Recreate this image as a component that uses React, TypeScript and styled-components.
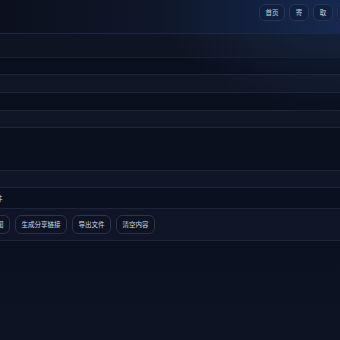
import styled, { createGlobalStyle } from 'styled-components';

const GlobalStyle = createGlobalStyle`
  html, body {
    margin: 0;
    padding: 0;
    background: #0a0f1c;
  }
  body {
    font-family: "Noto Sans CJK SC", "Noto Sans", sans-serif;
    color: #cbd3df;
    overflow: hidden;
  }
`;

const Viewport = styled.div`
  width: 340px;
  height: 340px;
  overflow: hidden;
  display: flex;
  justify-content: center;
  background:
    radial-gradient(ellipse 260px 160px at 340px 0px, rgba(34, 66, 130, 0.35), transparent 70%),
    linear-gradient(180deg, #0a0f1c 0%, #0b1020 60%, #0d1322 100%);
`;

const Page = styled.div`
  flex: 0 0 440px;
  width: 440px;
  display: flex;
  flex-direction: column;
`;

const Header = styled.header`
  height: 34px;
  box-sizing: border-box;
  display: flex;
  align-items: flex-start;
  justify-content: flex-end;
  padding: 4px 27px 0 20px;
  border-bottom: 1px solid #1d2940;
  background: linear-gradient(90deg, #0a0e19 0%, #0e1628 45%, #15274d 85%, #182c56 100%);
`;

const Nav = styled.nav`
  display: flex;
  gap: 4px;
`;

const NavButton = styled.button`
  height: 17px;
  min-width: 20px;
  box-sizing: border-box;
  padding: 0 5.5px;
  border-radius: 6px;
  border: 1px solid #26365a;
  background: rgba(16, 28, 56, 0.6);
  color: #c5cfdf;
  font-family: inherit;
  font-size: 6.5px;
  line-height: 1;
  cursor: pointer;
`;

const SubBar = styled.div`
  height: 24px;
  box-sizing: border-box;
  border-bottom: 1px solid #182134;
  background: rgba(255, 255, 255, 0.025);
`;

const Gap = styled.div<{ $h: number }>`
  height: ${(p) => p.$h}px;
`;

const Band = styled.div<{ $h: number }>`
  height: ${(p) => p.$h}px;
  box-sizing: border-box;
  border-top: 1px solid #1c2639;
  border-bottom: 1px solid #1c2639;
  background: rgba(148, 170, 220, 0.04);
`;

const FileRow = styled.div`
  height: 20px;
  display: flex;
  align-items: center;
  padding: 0 20px;
  font-size: 6.5px;
  color: #dbe2ee;
`;

const Toolbar = styled.div`
  height: 33px;
  box-sizing: border-box;
  display: flex;
  align-items: center;
  gap: 5px;
  padding: 0 21px;
  border-top: 1px solid #1c2639;
  border-bottom: 1px solid #1c2639;
  background: rgba(148, 170, 220, 0.035);
`;

const ToolButton = styled.button`
  height: 19px;
  box-sizing: border-box;
  padding: 0 5.5px;
  border-radius: 6px;
  border: 1px solid #283248;
  background: #0d1322;
  color: #d3dae6;
  font-family: inherit;
  font-size: 6.5px;
  line-height: 1;
  white-space: nowrap;
  cursor: pointer;
`;

const navItems = ['首页', '寄', '取', '设置'];
const tools = ['生成长图', '生成分享链接', '导出文件', '清空内容'];

export default function App() {
  return (
    <>
      <GlobalStyle />
      <Viewport>
        <Page>
          <Header>
            <Nav>
              {navItems.map((n) => (
                <NavButton key={n}>{n}</NavButton>
              ))}
            </Nav>
          </Header>
          <SubBar />
          <Gap $h={16} />
          <Band $h={19} />
          <Gap $h={17} />
          <Band $h={18} />
          <Gap $h={42} />
          <Band $h={18} />
          <FileRow>已选择文件</FileRow>
          <Toolbar>
            {tools.map((t) => (
              <ToolButton key={t}>{t}</ToolButton>
            ))}
          </Toolbar>
        </Page>
      </Viewport>
    </>
  );
}
